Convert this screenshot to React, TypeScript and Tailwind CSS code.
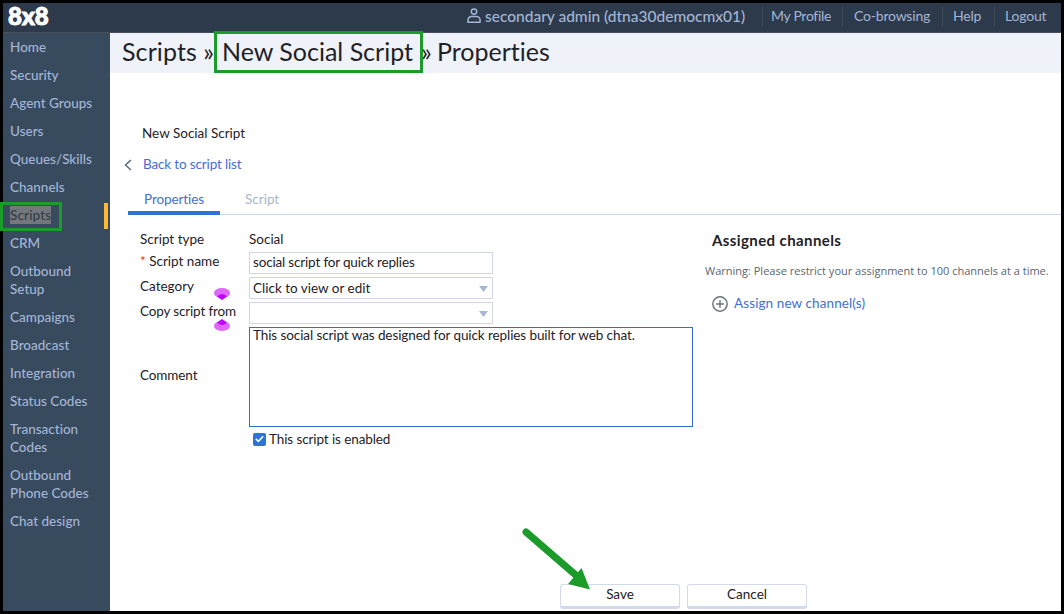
import React from 'react';
import { clsx } from 'clsx';

const navItems = [
  { label: 'Home' },
  { label: 'Security' },
  { label: 'Agent Groups' },
  { label: 'Users' },
  { label: 'Queues/Skills' },
  { label: 'Channels' },
  { label: 'Scripts', active: true },
  { label: 'CRM' },
  { label: 'Outbound Setup' },
  { label: 'Campaigns' },
  { label: 'Broadcast' },
  { label: 'Integration' },
  { label: 'Status Codes' },
  { label: 'Transaction Codes' },
  { label: 'Outbound Phone Codes' },
  { label: 'Chat design' },
];

const topLinks = [
  { label: 'My Profile', size: 'w-20 pl-2 tracking-[-0.3px]' },
  { label: 'Co-browsing', size: 'w-[100px] pl-[11px] tracking-[-0.2px]' },
  { label: 'Help', size: 'w-[52px] pl-[10px] tracking-[-0.2px]' },
  { label: 'Logout', size: 'w-[67px] pl-[10px] tracking-[-0.2px]' },
];

const Header: React.FC = () => (
  <header className="flex h-[30px] shrink-0 border-b border-[#47505a] bg-[#2d3a4b] text-[#a3b5d6]">
    <span className="ml-[5px] text-[24px] font-black leading-[26px] text-white [-webkit-text-stroke:1px_white]">8x8</span>
    <div className="ml-auto flex">
      <svg width="14" height="16" viewBox="0 0 14 16" className="mr-1 mt-[5px]" fill="none" stroke="currentColor" strokeWidth="1.5">
        <circle cx="7" cy="3.6" r="2.7" />
        <path d="M.9 14.2v-2a3.6 3.6 0 0 1 3.6-3.6h5a3.6 3.6 0 0 1 3.6 3.6v2z" strokeLinejoin="round" />
      </svg>
      <span className="w-[277px] text-[15.5px] font-medium leading-[26px]">secondary admin (dtna30democmx01)</span>
      {topLinks.map((link) => (
        <div key={link.label} className={clsx('mt-1 h-[19px] border-l border-[#404b58] text-[14px] leading-[18px]', link.size)}>
          {link.label}
        </div>
      ))}
    </div>
  </header>
);

const Sidebar: React.FC = () => (
  <nav className="w-[107px] shrink-0 bg-[#384a5e] text-[13.5px] font-medium leading-[18px] text-[#a3b5d6]">
    {navItems.map((item) => (
      <div key={item.label} className="relative py-[5px] pl-[7px] pr-4">
        <span className={clsx(item.active && 'bg-[#74787c] py-px tracking-[0.15px] text-[#343b45]')}>{item.label}</span>
        {item.active && (
          <>
            <span className="absolute right-[2px] top-[2px] h-[26px] w-1 bg-[#fdb933]" />
            <span className="absolute -left-[3px] top-[1px] h-[29px] w-[62px] border-[3px] border-[#1b9c2a]" />
          </>
        )}
      </div>
    ))}
  </nav>
);

const Select: React.FC<{ value?: string }> = ({ value }) => (
  <div className="flex h-[22px] w-[244px] items-center justify-between border border-[#cdd7e6] pl-[3px] pr-1">
    <span>{value}</span>
    <svg width="9" height="6" viewBox="0 0 9 6" className="mt-[2px]">
      <path d="M0 0h9L4.5 6z" fill="#a6b7d3" />
    </svg>
  </div>
);

const Marker: React.FC<{ flipped?: boolean }> = ({ flipped }) => (
  <svg
    width="16"
    height="12"
    viewBox="0 0 16 12"
    className={clsx('absolute left-[74px]', flipped ? 'top-[17px] rotate-180' : 'top-[11px]')}
  >
    <ellipse cx="8" cy="5" rx="8" ry="5" fill="#df66fb" />
    <path d="M3 8.500Q8 3.500 13 8.500L8 12z" fill="#bf00ff" />
  </svg>
);

const App: React.FC = () => (
  <div className="flex h-[614px] w-[1064px] flex-col border-[3px] border-black bg-white font-['Lato',sans-serif] text-[#1f2226] [font-variant-ligatures:none]">
    <Header />
    <div className="flex min-h-0 flex-1">
      <Sidebar />
      <main className="flex min-w-0 flex-1 flex-col text-[13.5px] leading-[18px]">
        <h1 className="flex h-10 shrink-0 items-center whitespace-pre bg-[#eff2f8] pl-3 text-[25px] leading-[38px]">
          <span className="-mt-1 w-[92px] tracking-[0.1px]">Scripts »</span>
          <span className="relative -mt-[2px] h-[42px] w-[209px] border-[3px] border-[#1b9c2a] pl-[5px] leading-[35px]">New Social Script</span>
          <span className="-ml-[2px] -mt-1 w-4">»</span>
          <span className="-mt-1">Properties</span>
        </h1>

        <div className="ml-8 mt-[51px]">New Social Script</div>
        <div className="ml-[14px] mt-[13px] flex items-center tracking-[-0.15px] text-[#3f6fd6]">
          <svg width="8" height="12" viewBox="0 0 8 12" className="mr-[11px] mt-[2px]" fill="none" stroke="#5f6b7a" strokeWidth="1.5">
            <path d="M7 1L1.500 6L7 11" />
          </svg>
          Back to script list
        </div>

        <div className="ml-[18px] mt-[15px] flex h-[27px] border-b border-[#cdd7e6] leading-[22px]">
          <div className="h-[27px] w-[92px] border-b-4 border-[#3171d6] pl-4 tracking-[-0.1px] text-[#3f6fd6]">Properties</div>
          <div className="pl-[25px] text-[#a9b6ca]">Script</div>
        </div>

        <div className="flex">
          <div className="w-[583px] shrink-0 pl-[30px] pt-[15px]">
            <div className="flex">
              <div className="w-[109px]">Script type</div>
              <div>Social</div>
            </div>
            <div className="mt-1 flex h-[22px]">
              <div className="w-[109px]"><span className="text-[#d9302c]">*</span> Script name</div>
              <div className="h-[22px] w-[244px] border border-[#cdd7e6] pl-[3px] leading-[19px] tracking-[-0.17px]">social script for quick replies</div>
            </div>
            <div className="mt-[3px] flex h-[22px]">
              <div className="relative w-[109px]">Category<Marker /></div>
              <Select value="Click to view or edit" />
            </div>
            <div className="mt-[3px] flex h-[22px]">
              <div className="relative w-[109px] tracking-[-0.15px]">Copy script from<Marker flipped /></div>
              <Select />
            </div>
            <div className="mt-[3px] flex h-[100px] items-center">
              <div className="w-[109px] shrink-0 pb-1 tracking-[-0.1px]">Comment</div>
              <div className="h-[100px] w-[444px] border border-[#2f6fd0] pl-[3px] leading-[15px] tracking-[-0.09px]">
                This social script was designed for quick replies built for web chat.
              </div>
            </div>
            <div className="ml-[113px] mt-[3px] flex items-center tracking-[-0.1px]">
              <span className="mr-[3px] flex size-[13px] items-center justify-center rounded-[2px] bg-[#2f72d8]">
                <svg width="9" height="8" viewBox="0 0 9 8" fill="none" stroke="#fff" strokeWidth="1.6">
                  <path d="M.8 3.800L3.400 6.300L8.200 1.300" />
                </svg>
              </span>
              This script is enabled
            </div>
          </div>

          <aside className="pt-4">
            <h2 className="pl-[19px] text-[15px] font-bold tracking-[0.4px]">Assigned channels</h2>
            <p className="mt-[13px] whitespace-nowrap pl-3 font-['Open_Sans',sans-serif] text-[11px] text-[#5c6570]">
              Warning: Please restrict your assignment to 100 channels at a time.
            </p>
            <div className="mt-[14px] flex items-center pl-[19px] tracking-[0.1px] text-[#3f6fd6]">
              <svg width="16" height="16" viewBox="0 0 16 16" className="mr-[6px] mt-px" fill="none" stroke="#67717d" strokeWidth="1.4">
                <circle cx="8" cy="8" r="7.2" />
                <path d="M8 4.200v7.600M4.200 8h7.600" />
              </svg>
              Assign new channel(s)
            </div>
          </aside>
        </div>

        <div className="relative mb-[2px] ml-[450px] mt-auto flex gap-[7px] text-center">
          <div className="h-[25px] w-[120px] rounded-[3px] border border-b-[3px] border-[#d0daea] leading-[19px]">Save</div>
          <div className="h-[25px] w-[120px] rounded-[3px] border border-b-[3px] border-[#d0daea] leading-[19px]">Cancel</div>
          <svg width="70" height="64" viewBox="0 0 70 64" className="absolute -left-[39px] -top-[57px]">
            <path d="M5 5L57 50" stroke="#1b9c2a" strokeWidth="7" strokeLinecap="round" />
            <path d="M69 62.500L60.500 41L47 57z" fill="#1b9c2a" />
          </svg>
        </div>
      </main>
    </div>
  </div>
);

export default App;
